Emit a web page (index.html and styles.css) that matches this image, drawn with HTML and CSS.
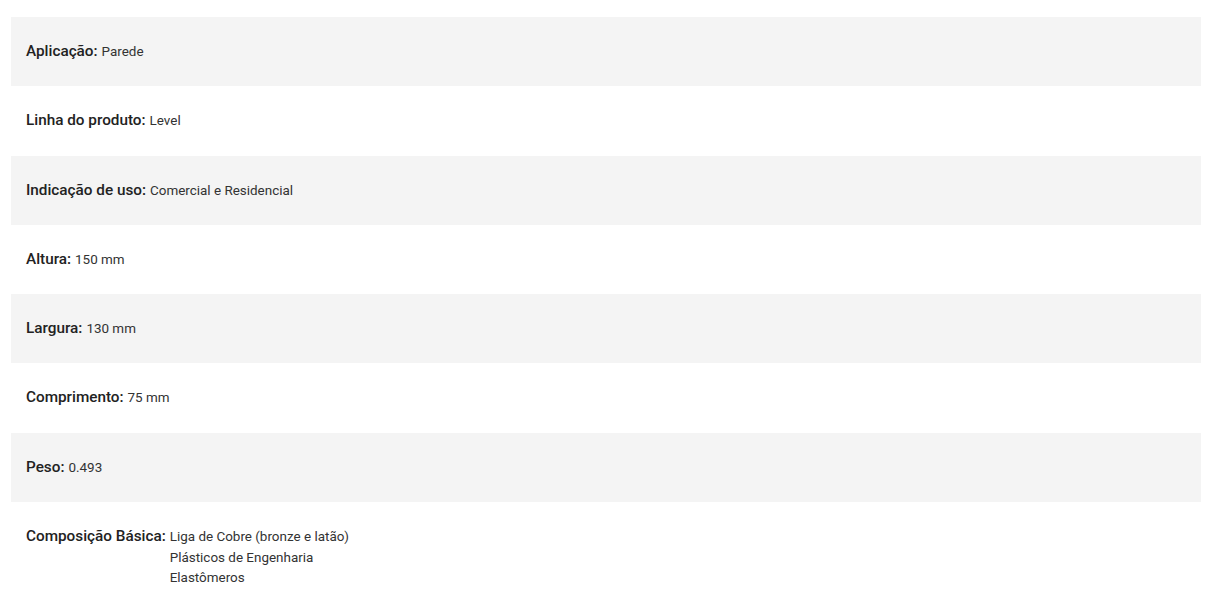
FILE: index.html
```html
<!DOCTYPE html>
<html lang="pt">
<head>
<meta charset="utf-8">
<link rel="stylesheet" href="styles.css">
</head>
<body>
<div class="specs">
  <div class="row shaded"><span class="label">Aplicação:</span><span class="value">Parede</span></div>
  <div class="row"><span class="label">Linha do produto:</span><span class="value">Level</span></div>
  <div class="row shaded"><span class="label">Indicação de uso:</span><span class="value">Comercial e Residencial</span></div>
  <div class="row"><span class="label">Altura:</span><span class="value">150 mm</span></div>
  <div class="row shaded"><span class="label">Largura:</span><span class="value">130 mm</span></div>
  <div class="row"><span class="label">Comprimento:</span><span class="value">75 mm</span></div>
  <div class="row shaded"><span class="label">Peso:</span><span class="value">0.493</span></div>
  <div class="row"><span class="label">Composição Básica:</span><span class="value multi">Liga de Cobre (bronze e latão)<br>Plásticos de Engenharia<br>Elastômeros</span></div>
</div>
</body>
</html>
```

FILE: styles.css
```css
html, body {
  margin: 0;
  padding: 0;
  background: #fff;
}
body {
  font-family: Roboto, "Liberation Sans", sans-serif;
  color: #222;
}
.specs {
  padding: 17px 9px 0 11px;
}
.row {
  display: flex;
  align-items: baseline;
  gap: 4px;
  padding: 25px 15px;
  min-height: 19.3px;
  line-height: 19.3px;
}
.row.shaded {
  background: #f4f4f4;
}
.label {
  font-size: 15.3px;
  font-weight: 500;
  color: #222;
}
.value {
  font-size: 13.45px;
  color: #333;
}
.value.multi {
  line-height: 20.5px;
}
```
